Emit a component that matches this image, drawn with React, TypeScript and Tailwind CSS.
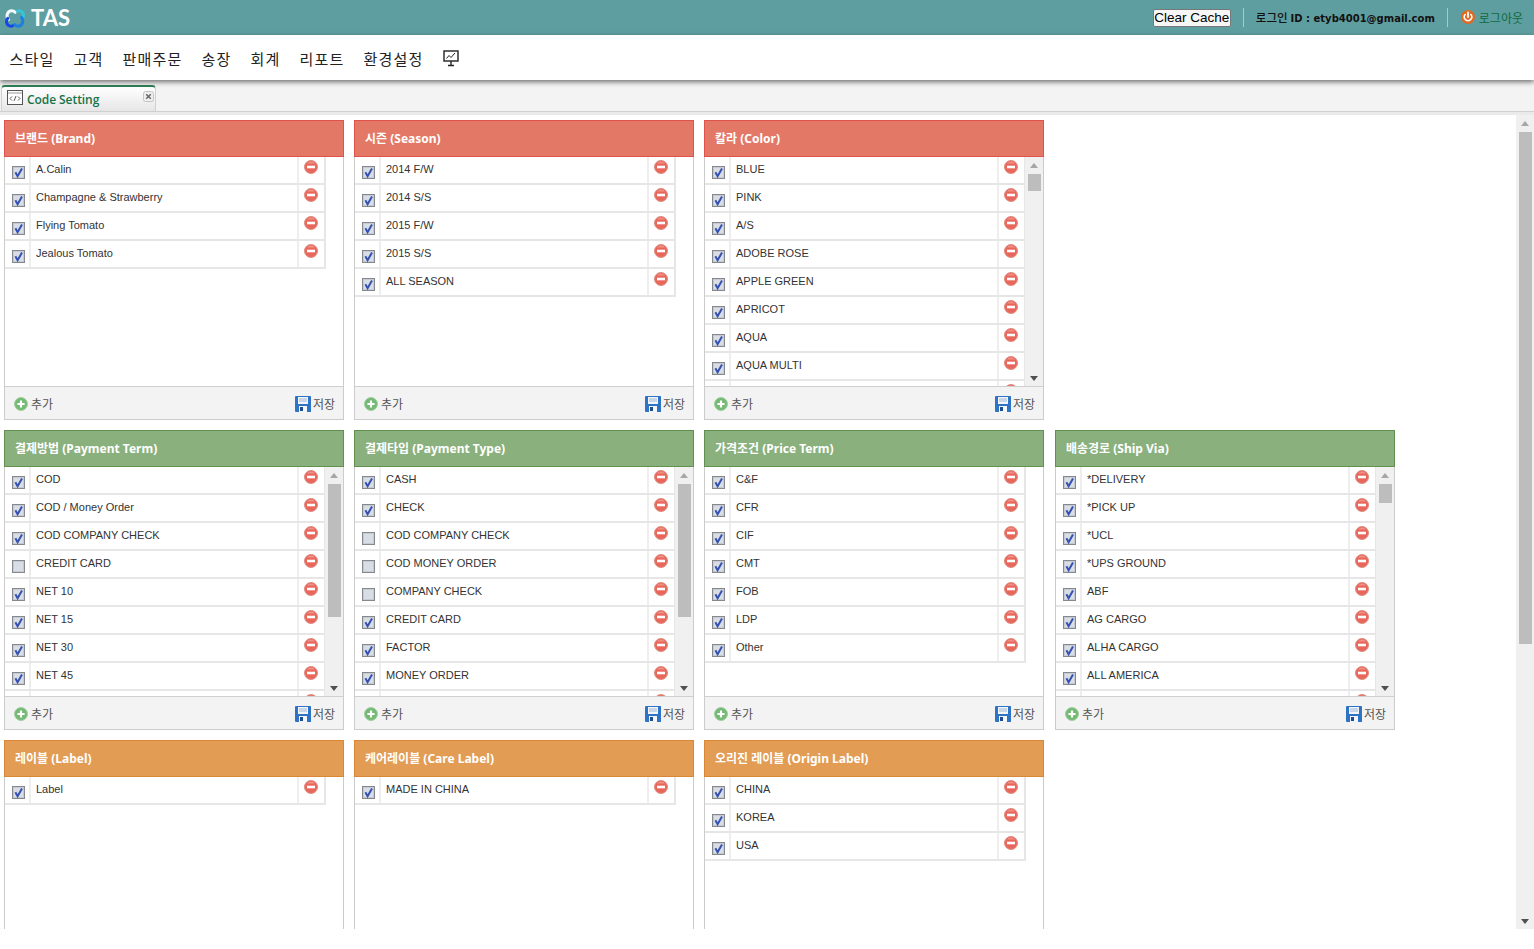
import React from "react";

type Item = { name: string; off?: boolean };
type Panel = {
  title: string;
  items: Item[];
  // scrollbar thumb, offset from list top and height
  thumb?: [number, number];
};

const names = (...list: string[]): Item[] => list.map((name) => ({ name }));

// scrolled lists end in an empty row, only its top edge shows above the footer
const topRow: Panel[] = [
  { title: "브랜드 (Brand)", items: names("A.Calin", "Champagne & Strawberry", "Flying Tomato", "Jealous Tomato") },
  { title: "시즌 (Season)", items: names("2014 F/W", "2014 S/S", "2015 F/W", "2015 S/S", "ALL SEASON") },
  {
    title: "칼라 (Color)",
    thumb: [17, 17],
    items: names("BLUE", "PINK", "A/S", "ADOBE ROSE", "APPLE GREEN", "APRICOT", "AQUA", "AQUA MULTI", ""),
  },
];

const middleRow: Panel[] = [
  {
    title: "결제방법 (Payment Term)",
    thumb: [17, 133],
    items: [
      ...names("COD", "COD / Money Order", "COD COMPANY CHECK"),
      { name: "CREDIT CARD", off: true },
      ...names("NET 10", "NET 15", "NET 30", "NET 45", ""),
    ],
  },
  {
    title: "결제타입 (Payment Type)",
    thumb: [17, 133],
    items: [
      ...names("CASH", "CHECK"),
      { name: "COD COMPANY CHECK", off: true },
      { name: "COD MONEY ORDER", off: true },
      { name: "COMPANY CHECK", off: true },
      ...names("CREDIT CARD", "FACTOR", "MONEY ORDER", ""),
    ],
  },
  { title: "가격조건 (Price Term)", items: names("C&F", "CFR", "CIF", "CMT", "FOB", "LDP", "Other") },
  {
    title: "배송경로 (Ship Via)",
    thumb: [17, 19],
    items: names("*DELIVERY", "*PICK UP", "*UCL", "*UPS GROUND", "ABF", "AG CARGO", "ALHA CARGO", "ALL AMERICA", ""),
  },
];

const bottomRow: Panel[] = [
  { title: "레이블 (Label)", items: names("Label") },
  { title: "케어레이블 (Care Label)", items: names("MADE IN CHINA") },
  { title: "오리진 레이블 (Origin Label)", items: names("CHINA", "KOREA", "USA") },
];

const redHead = "bg-[#e37867] border-[#e0534c]";
const greenHead = "bg-[#8ab17d] border-[#62914f]";
const orangeHead = "bg-[#e29c53] border-[#d98735]";

const navItems = ["스타일", "고객", "판매주문", "송장", "회계", "리포트", "환경설정"];

const CheckBox = ({ off }: { off?: boolean }) => (
  <svg width="13" height="13" viewBox="0 0 13 13" className="block">
    <rect x="0.5" y="0.5" width="12" height="12" fill="#d9dde5" stroke="#85888d" />
    <rect x="1.5" y="1.5" width="10" height="10" fill="none" stroke="#c6cad2" />
    {!off && <path d="M3.4 6.2 L5.6 10.2 L10 2.6" fill="none" stroke="#3450b2" strokeWidth="2" />}
  </svg>
);

const RemoveIcon = () => (
  <svg width="14" height="14" viewBox="0 0 14 14" className="block">
    <circle cx="7" cy="7" r="6.5" fill="#e9665b" stroke="#dd8f84" strokeWidth="1" />
    <path d="M3 3.5a5.2 5.2 0 0 1 8 0Z" fill="#f08f85" />
    <rect x="3" y="5.7" width="8" height="2.6" fill="#fff" />
  </svg>
);

const AddIcon = () => (
  <svg width="14" height="14" viewBox="0 0 14 14" className="block">
    <circle cx="7" cy="7" r="6.5" fill="#74b974" stroke="#a3cfa3" />
    <path d="M7 3.4V10.6M3.4 7H10.6" stroke="#fff" strokeWidth="2.2" />
  </svg>
);

const SaveIcon = () => (
  <svg width="16" height="16" viewBox="0 0 16 16" className="block">
    <path d="M1 0H15.5a.5.5 0 0 1 .5.5V16H1a1 1 0 0 1-1-1V1a1 1 0 0 1 1-1Z" fill="#2f74c4" />
    <rect x="3" y="1" width="10" height="7" fill="#f2f5fa" />
    <path d="M4 3H12M4 5H12" stroke="#9db6d8" />
    <rect x="4" y="10" width="8" height="6" fill="#f2f5fa" />
    <rect x="5" y="11" width="3" height="4" fill="#1c4c8e" />
  </svg>
);

const ScrollBar = ({ top, height }: { top: number; height: number }) => (
  <div className="relative w-[18px] shrink-0 bg-[#f0f0f0]">
    <div className="absolute left-[5px] top-[6px] h-0 w-0 border-x-[4px] border-b-[5px] border-x-transparent border-b-[#a6a6a6]" />
    <div className="absolute left-[3px] w-[13px] bg-[#bdbdbd]" style={{ top, height }} />
    <div className="absolute bottom-[5px] left-[5px] h-0 w-0 border-x-[4px] border-t-[5px] border-x-transparent border-t-[#505050]" />
  </div>
);

const Row = ({ item }: { item: Item }) => (
  <div className="flex h-[28px] w-[321px] shrink-0 border-b-2 border-r-2 border-[#e6e6e6]">
    <div className="w-[26px] shrink-0 border-r-2 border-[#eeeeee] pl-[7px] pt-[9px]">
      <CheckBox off={item.off} />
    </div>
    <div className="flex-1 truncate pl-[5px] pt-[5px] text-[11px] leading-[15px] text-[#333333]">{item.name}</div>
    <div className="w-[27px] shrink-0 border-l-2 border-[#eeeeee] pl-[5px] pt-[3px]">
      <RemoveIcon />
    </div>
  </div>
);

const CodePanel = ({ panel, head, footer = true }: { panel: Panel; head: string; footer?: boolean }) => (
  <section className="flex h-[300px] w-[340px] shrink-0 flex-col border-x border-b border-[#cccccc] bg-white">
    <header
      className={`-mx-px flex h-[37px] shrink-0 items-center border pl-[10px] font-['Noto_Sans','Noto_Sans_CJK_KR',sans-serif] text-[12px] font-bold text-white ${head}`}
    >
      {panel.title}
    </header>
    <div className="flex min-h-0 flex-1">
      <div className="flex-1 overflow-hidden">
        {panel.items.map((item, i) => (
          <Row key={i} item={item} />
        ))}
      </div>
      {panel.thumb && <ScrollBar top={panel.thumb[0]} height={panel.thumb[1]} />}
    </div>
    {footer && (
      <footer className="flex h-[33px] shrink-0 items-center justify-between border-t border-[#cfcfcf] bg-[#f3f3f3] pl-[9px] pr-[8px] pt-[1px] font-['Noto_Sans_CJK_KR',sans-serif] text-[12px] leading-[16px] text-[#555555]">
        <span className="flex items-center gap-[3px]">
          <AddIcon />
          추가
        </span>
        <span className="flex items-center gap-[2px]">
          <SaveIcon />
          저장
        </span>
      </footer>
    )}
  </section>
);

const Logo = () => (
  <div className="flex items-center gap-[6px]">
    <svg width="20" height="19" viewBox="0 0 20 19" className="mt-[1px]">
      <path d="M3.5 10.5C0.5 7.5 2.5 1.8 6.8 1.8c1.5 0 2.5.6 3.3 1.5" fill="none" stroke="#f2fafb" strokeWidth="3" strokeLinecap="round" />
      <path d="M12.5 2.2c3-1.2 6.3 1 6 4.6-.1 1.3-.6 2.2-1.5 3" fill="none" stroke="#35c4d8" strokeWidth="3" strokeLinecap="round" />
      <path d="M16.5 8.5c2.7 3.4.8 8.7-3.5 8.7-1.5 0-2.5-.6-3.3-1.5" fill="none" stroke="#1d7fe0" strokeWidth="3" strokeLinecap="round" />
      <path d="M7.5 16.8c-3 1.2-6.3-1-6-4.6.1-1.2.5-2 1.2-2.8" fill="none" stroke="#1747e6" strokeWidth="3" strokeLinecap="round" />
    </svg>
    <span className="font-['Lato',sans-serif] text-[22px] font-bold leading-none text-white">TAS</span>
  </div>
);

const TopBar = () => (
  <div className="flex h-[35px] shrink-0 items-center bg-[#5f9ea0] pl-[5px] pr-[11px]">
    <Logo />
    <div className="ml-auto flex items-center">
      <button className="h-[18px] w-[78px] whitespace-nowrap rounded-[2px] border border-[#777777] bg-[#f6f6f6] text-center text-[13.5px] leading-[15px] text-black">
        Clear Cache
      </button>
      <div className="ml-[12px] h-[19px] w-[1px] bg-[#a9cacb]" />
      <span className="ml-[12px] flex items-baseline gap-[3px] font-['DejaVu_Sans','Noto_Sans_CJK_KR',sans-serif] text-[10px] font-bold text-[#111111]">
        <span className="font-['Noto_Sans_CJK_KR',sans-serif] text-[11.5px] font-medium">로그인</span>
        ID : etyb4001@gmail.com
      </span>
      <div className="ml-[12px] h-[19px] w-[1px] bg-[#a9cacb]" />
      <svg width="14" height="14" viewBox="0 0 14 14" className="mb-[2px] ml-[13px]">
        <circle cx="7" cy="7" r="7" fill="#df6a22" />
        <path d="M7 2.5V7" stroke="#fff" strokeWidth="1.8" strokeLinecap="round" />
        <path d="M4.2 4.5a3.7 3.7 0 1 0 5.6 0" fill="none" stroke="#fff" strokeWidth="1.5" strokeLinecap="round" />
      </svg>
      <span className="ml-[4px] font-['Noto_Sans_CJK_KR',sans-serif] text-[12px] text-[#0c6b3c]">로그아웃</span>
    </div>
  </div>
);

const NavBar = () => (
  <nav className="relative z-10 flex h-[45px] shrink-0 items-center gap-[19px] bg-white pl-[9.5px] pt-[3px] font-['Noto_Sans_CJK_KR',sans-serif] text-[15px] leading-[20px] tracking-[1.2px] text-[#222222] shadow-[0_2px_5px_rgba(0,0,0,0.55)]">
    {navItems.map((label) => (
      <span key={label}>{label}</span>
    ))}
    <svg width="16" height="17" viewBox="0 0 16 17" className="mb-[2px]">
      <rect x="1" y="1" width="14" height="10" fill="#fff" stroke="#222" strokeWidth="1.4" />
      <path d="M3.5 8.5L6 5.5L8 7.5L12 3" fill="none" stroke="#222" />
      <path d="M8 11V15M5 15.5H11" stroke="#222" strokeWidth="1.4" />
    </svg>
  </nav>
);

const TabStrip = () => (
  <div className="flex h-[35px] shrink-0 flex-col bg-[#f3f3f3]">
    <div className="flex h-[32px] shrink-0 items-end border-b border-[#d0d0d0] pl-[1px]">
      <div className="-mb-px flex h-[27px] w-[155px] items-start rounded-t-[4px] border-x border-b border-t-2 border-[#d0d0d0] border-t-[#2f7f57] bg-gradient-to-b from-white to-[#e6e6e6]">
        <svg width="16" height="15" viewBox="0 0 16 15" className="ml-[5px] mt-[3px] shrink-0">
          <rect x="0.5" y="0.5" width="15" height="14" fill="#fff" stroke="#555" />
          <path d="M1 3H15" stroke="#999" />
          <path d="M5 6.5L3 8.5L5 10.5M11 6.5L13 8.5L11 10.5M9 6L7 11" fill="none" stroke="#444" strokeWidth="0.9" />
        </svg>
        <span className="ml-[4px] mt-[5px] font-['Open_Sans',sans-serif] text-[12px] font-semibold leading-[16px] tracking-[-0.07px] text-[#16734a]">
          Code Setting
        </span>
        <svg width="11" height="11" viewBox="0 0 11 11" className="ml-auto mr-[1px] mt-[4px] shrink-0">
          <rect x="0.5" y="0.5" width="10" height="10" rx="2" fill="#eeeeee" stroke="#c4c4c4" />
          <path d="M3.2 3.2L7.8 7.8M7.8 3.2L3.2 7.8" stroke="#666" strokeWidth="1.5" />
        </svg>
      </div>
    </div>
    <div className="h-[3px] bg-[#eaeaea]" />
  </div>
);

export default function App() {
  return (
    <div className="flex h-[949px] w-[1534px] flex-col overflow-hidden bg-white font-['Liberation_Sans','Noto_Sans_CJK_KR',sans-serif]">
      <TopBar />
      <NavBar />
      <TabStrip />
      <div className="flex h-[814px] shrink-0">
        <main className="flex min-w-0 flex-1 flex-col gap-[10px] overflow-hidden pl-[4px] pt-[5px]">
          <div className="flex gap-[10px]">
            {topRow.map((p) => (
              <CodePanel key={p.title} panel={p} head={redHead} />
            ))}
          </div>
          <div className="flex gap-[10px] [&>*:last-child]:ml-[1px]">
            {middleRow.map((p) => (
              <CodePanel key={p.title} panel={p} head={greenHead} />
            ))}
          </div>
          <div className="flex gap-[10px]">
            {/* the last row runs below the fold, its footer never shows */}
            {bottomRow.map((p) => (
              <CodePanel key={p.title} panel={p} head={orangeHead} footer={false} />
            ))}
          </div>
        </main>
        <ScrollBar top={17} height={512} />
      </div>
    </div>
  );
}
